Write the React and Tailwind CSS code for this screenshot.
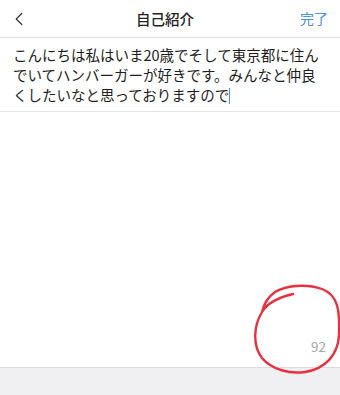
import React from 'react';
import { ChevronLeft } from 'lucide-react';

const font = { fontFamily: '"Noto Sans CJK JP", "Noto Sans", sans-serif' };

const App = () => {
  return (
    <div className="relative w-[340px] h-[395px] flex flex-col bg-white overflow-hidden" style={font}>
      {/* header */}
      <div className="h-[38px] shrink-0 flex items-center justify-between border-b border-[#dcdcdc] px-[10px]">
        <ChevronLeft className="w-[22px] h-[22px] text-[#333] -ml-[2px]" strokeWidth={1.3} />
        <div className="text-[14.5px] font-medium text-[#222]">自己紹介</div>
        <div className="text-[14px] text-[#4a90e2] pr-[2px]">完了</div>
      </div>

      {/* bio text */}
      <div className="h-[74px] shrink-0 border-b border-[#e2e2e2] pl-[13px] pr-[20px] pt-[7px]">
        <p className="text-[14.5px] leading-[20px] text-[#1e1e1e]">
          こんにちは私はいま20歳でそして東京都に住んでいてハンバーガーが好きです。みんなと仲良くしたいなと思っておりますので
          <span className="inline-block w-[1px] h-[16px] bg-[#4a90e2] align-[-3px]"></span>
        </p>
      </div>

      {/* counter */}
      <div className="flex-1 flex items-end justify-end pr-[14px] pb-[13px]">
        <span className="text-[13.5px] leading-[16px] text-[#a8a8a8]">92</span>
      </div>

      {/* bottom bar */}
      <div className="h-[28px] shrink-0 bg-[#f0f0f3] border-t border-[#dcdcdc]"></div>

      {/* hand-drawn red circle */}
      <svg className="absolute left-0 top-0 pointer-events-none" width="340" height="395" viewBox="0 0 340 395" fill="none">
        <path
          d="M293,294 C280,297 268,302 262,312 C254,325 252,345 262,358 C272,370 290,374 305,372 C325,369 338,355 339,335 C340,310 338,295 322,289 C305,283 285,286 275,292 C268,297 264,303 262,312"
          stroke="#e8303f"
          strokeWidth="2.4"
          strokeLinecap="round"
        />
      </svg>
    </div>
  );
};

export default App;
